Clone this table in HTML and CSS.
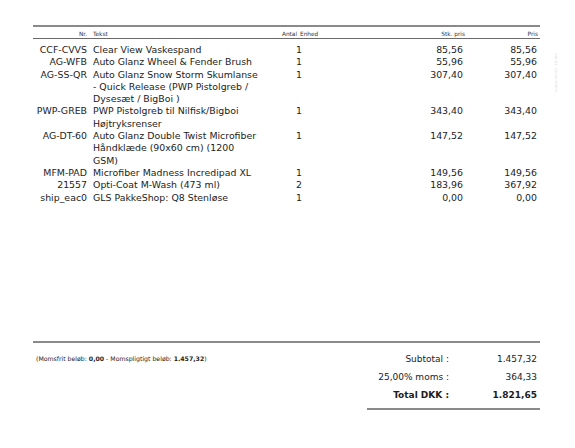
FILE: index.html
```html
<!DOCTYPE html>
<html lang="da">

<head>
    <meta charset="UTF-8">
    <meta name="viewport" content="width=device-width, initial-scale=1.0">
    <title>Faktura</title>
    <link rel="stylesheet" href="styles.css">
</head>

<body>
    <div class="page">
        <div class="lines">
            <div class="line head">
                <span class="nr">Nr.</span>
                <span class="text">Tekst</span>
                <span class="antal">Antal</span>
                <span class="enhed">Enhed</span>
                <span class="stk">Stk. pris</span>
                <span class="pris">Pris</span>
            </div>
            <div class="line">
                <span class="nr">CCF-CVVS</span>
                <span class="text">Clear View Vaskespand</span>
                <span class="antal">1</span>
                <span class="enhed"></span>
                <span class="stk">85,56</span>
                <span class="pris">85,56</span>
            </div>
            <div class="line">
                <span class="nr">AG-WFB</span>
                <span class="text">Auto Glanz Wheel &amp; Fender Brush</span>
                <span class="antal">1</span>
                <span class="enhed"></span>
                <span class="stk">55,96</span>
                <span class="pris">55,96</span>
            </div>
            <div class="line">
                <span class="nr">AG-SS-QR</span>
                <span class="text">Auto Glanz Snow Storm Skumlanse - Quick Release (PWP Pistolgreb / Dysesæt / BigBoi )</span>
                <span class="antal">1</span>
                <span class="enhed"></span>
                <span class="stk">307,40</span>
                <span class="pris">307,40</span>
            </div>
            <div class="line">
                <span class="nr">PWP-GREB</span>
                <span class="text">PWP Pistolgreb til Nilfisk/Bigboi Højtryksrenser</span>
                <span class="antal">1</span>
                <span class="enhed"></span>
                <span class="stk">343,40</span>
                <span class="pris">343,40</span>
            </div>
            <div class="line">
                <span class="nr">AG-DT-60</span>
                <span class="text">Auto Glanz Double Twist Microfiber Håndklæde (90x60 cm) (1200 GSM)</span>
                <span class="antal">1</span>
                <span class="enhed"></span>
                <span class="stk">147,52</span>
                <span class="pris">147,52</span>
            </div>
            <div class="line">
                <span class="nr">MFM-PAD</span>
                <span class="text">Microfiber Madness Incredipad XL</span>
                <span class="antal">1</span>
                <span class="enhed"></span>
                <span class="stk">149,56</span>
                <span class="pris">149,56</span>
            </div>
            <div class="line">
                <span class="nr">21557</span>
                <span class="text">Opti-Coat M-Wash (473 ml)</span>
                <span class="antal">2</span>
                <span class="enhed"></span>
                <span class="stk">183,96</span>
                <span class="pris">367,92</span>
            </div>
            <div class="line">
                <span class="nr">ship_eac0</span>
                <span class="text">GLS PakkeShop: Q8 Stenløse</span>
                <span class="antal">1</span>
                <span class="enhed"></span>
                <span class="stk">0,00</span>
                <span class="pris">0,00</span>
            </div>
        </div>

        <div class="footer">
            <p class="vat_note">(Momsfrit beløb: <b>0,00</b> - Momspligtigt beløb: <b>1.457,32</b>)</p>
            <div class="totals">
                <div class="total_row">
                    <span class="label">Subtotal :</span>
                    <span class="amount">1.457,32</span>
                </div>
                <div class="total_row">
                    <span class="label">25,00% moms :</span>
                    <span class="amount">364,33</span>
                </div>
                <div class="total_row grand">
                    <span class="label">Total DKK :</span>
                    <span class="amount">1.821,65</span>
                </div>
            </div>
        </div>
    </div>
    <div class="side_note">Side 1/1 - Faktura 104871</div>
</body>

</html>
```

FILE: styles.css
```css
*,
::before,
::after {
    box-sizing: border-box;
}

body {
    margin: unset;
    background-color: white;
    color: #1c1c1c;
    font-family: "DejaVu Sans", Verdana, sans-serif;
}

.page {
    width: 507px;
    margin-left: 33px;
    padding-top: 25px;
}

.lines {
    border-top: 2px solid #8a8a8a;
    height: 316px;
}

.line {
    display: grid;
    grid-template-columns: 54px 178px 38px 82px 80px 73px;
    font-size: 9.4px;
    line-height: 12.3px;
}

.line .nr,
.line .antal,
.line .stk,
.line .pris {
    text-align: right;
}

.line .text {
    padding-left: 6px;
    padding-right: 3px;
}

.line .antal {
    padding-right: 1px;
}

.line .stk {
    padding-right: 2px;
}

.line .pris {
    padding-right: 1px;
}

.head {
    font-size: 5.8px;
    line-height: 7px;
    padding-top: 4px;
    color: #333;
    border-bottom: 1px solid #6a6a6a;
    margin-bottom: 5px;
}

.head .antal {
    padding-right: 6px;
}

.head .enhed {
    margin-left: -3px;
}

.head .stk,
.head .pris {
    padding-right: 0;
}

.footer {
    border-top: 2px solid #8a8a8a;
    display: flex;
    justify-content: space-between;
    align-items: flex-start;
}

.vat_note {
    margin: 12px 0 0 3px;
    font-size: 6.2px;
}

.totals {
    width: 173px;
    margin-top: 7px;
    border-bottom: 2px solid #8a8a8a;
    padding-bottom: 4px;
}

.total_row {
    display: flex;
    font-size: 9px;
    line-height: 18px;
}

.total_row .label {
    width: 82px;
    text-align: right;
}

.total_row .amount {
    flex: 1;
    text-align: right;
    padding-right: 3px;
}

.grand {
    font-weight: bold;
}

.side_note {
    position: absolute;
    left: 554px;
    top: 53px;
    writing-mode: vertical-rl;
    font-size: 3px;
    color: #dadada;
}
```
